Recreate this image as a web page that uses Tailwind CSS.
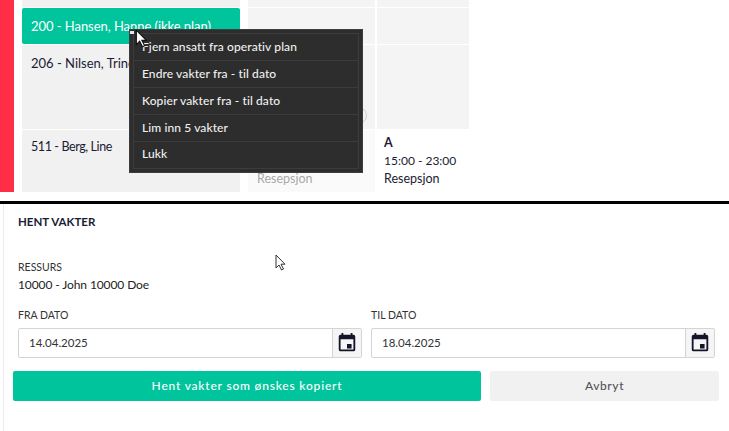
<!DOCTYPE html>
<html lang="no">
<head>
  <meta charset="UTF-8"/>
  <title>Hent vakter</title>
  <script src="https://cdn.jsdelivr.net/npm/@tailwindcss/browser@4"></script>
</head>
<body class="w-[729px] h-[431px] overflow-hidden bg-white font-['Lato',sans-serif] text-[#1b1b33]">

  <!-- Schedule -->
  <div class="relative flex h-[192px] overflow-hidden">
    <div class="w-[14px] bg-[#ff2d46]"></div>
    <div class="ml-[8px] w-[218px] flex flex-col gap-[1px]">
      <div class="h-[7px] bg-[#f1f1f1]"></div>
      <div class="h-[36px] bg-[#00c59c] rounded-[2px] pl-[9px] pt-[9px] text-[13px] leading-[18px] tracking-[-0.05px] text-white">200 - Hansen, Hanne (ikke plan)</div>
      <div class="h-[84px] bg-[#f1f1f1] pl-[9px] pt-[9px] text-[13px] leading-[18px]">206 - Nilsen, Trine</div>
      <div class="flex-1 bg-[#f1f1f1] pl-[9px] pt-[8px] text-[12.5px] leading-[18px] tracking-[-0.4px]">511 - Berg, Line</div>
    </div>
    <div class="ml-[8px] w-[127px] flex flex-col gap-[1px]">
      <div class="h-[7px] bg-[#f4f4f4]"></div>
      <div class="h-[36px] bg-[#f4f4f4]"></div>
      <div class="h-[84px] bg-[#f4f4f4]"></div>
      <div class="flex-1 bg-[#fafafa] pl-[9px] pt-[40px] text-[12.5px] leading-[18px] text-[#a8a8a8]">Resepsjon</div>
    </div>
    <div class="ml-[2px] w-[92px] flex flex-col gap-[1px]">
      <div class="h-[7px] bg-[#f4f4f4]"></div>
      <div class="h-[36px] bg-[#f4f4f4]"></div>
      <div class="h-[84px] bg-[#f4f4f4]"></div>
      <div class="flex-1 mt-[1px] bg-white pl-[7px] pt-[3px] text-[12.5px] leading-[18px]">
        <div class="font-bold">A</div>
        <div class="text-[12px]">15:00 - 23:00</div>
        <div>Resepsjon</div>
      </div>
    </div>

    <!-- Circle peeking out behind the menu -->
    <div class="absolute left-[348px] top-[107px] w-[19px] h-[17px] rounded-full border border-[#cfcfcf]"></div>

    <!-- Context menu -->
    <div class="absolute left-[129px] top-[29px] w-[234px] h-[144px] bg-[#2d2d2d] border border-[#3d3d3d] p-[3px] text-[12px] tracking-[0.1px] font-medium text-[#f0f0f0]">
      <div class="h-[28px] border border-[#3c3c3c] pl-[8px] flex items-center">Fjern ansatt fra operativ plan</div>
      <div class="h-[27px] border-x border-b border-[#3c3c3c] pl-[8px] flex items-center">Endre vakter fra - til dato</div>
      <div class="h-[27px] border-x border-b border-[#3c3c3c] pl-[8px] flex items-center">Kopier vakter fra - til dato</div>
      <div class="h-[27px] border-x border-b border-[#3c3c3c] pl-[8px] flex items-center">Lim inn 5 vakter</div>
      <div class="h-[27px] border-x border-b border-[#3c3c3c] pl-[8px] pb-[2px] flex items-center">Lukk</div>
    </div>
    <div class="absolute left-[130px] top-[31px] w-[4px] h-[3px] bg-[#e8e8e8]"></div>
    <svg class="absolute left-[135px] top-[29px]" width="16" height="20" viewBox="0 0 14 18"><path d="M1 1v13l3-3 2.500 5 2-1-2.500-4.800h4z" fill="#fff" stroke="#111" stroke-width="1"/></svg>
  </div>

  <div class="mt-[9px] h-[3px] bg-black"></div>

  <!-- Form -->
  <div class="relative h-[228px] ml-[3px] border-l border-[#ececec] pl-[14px] pr-[14px]">
    <h2 class="pt-[10px] text-[11.5px] leading-[16px] font-bold">HENT VAKTER</h2>
    <div class="mt-[30px] text-[10.500px] leading-[14px] text-[#333]">RESSURS</div>
    <div class="mt-[3px] text-[12px] leading-[16px] tracking-[-0.1px] text-[#222]">10000 - John 10000 Doe</div>

    <div class="mt-[15px] flex gap-[9px]">
      <div class="w-[344px]">
        <div class="text-[10.500px] leading-[14px] text-[#333]">FRA DATO</div>
        <div class="mt-[6px] h-[30px] flex border border-[#d4d4d4] rounded-[2px]">
          <div class="flex-1 pl-[10px] text-[11.5px] leading-[27px] text-[#333]">14.04.2025</div>
          <div class="w-[29px] flex items-center justify-center bg-[#f5f5f5] border-l border-[#d4d4d4]">
            <svg width="22" height="22" viewBox="0 0 24 24" fill="#14142b"><path d="M19 3h-1V1h-2v2H8V1H6v2H5a2 2 0 0 0-2 2v14a2 2 0 0 0 2 2h14a2 2 0 0 0 2-2V5a2 2 0 0 0-2-2zm0 16H5V8h14zm-7-6h5v5h-5z"/></svg>
          </div>
        </div>
      </div>
      <div class="w-[344px]">
        <div class="text-[10.500px] leading-[14px] text-[#333]">TIL DATO</div>
        <div class="mt-[6px] h-[30px] flex border border-[#d4d4d4] rounded-[2px]">
          <div class="flex-1 pl-[10px] text-[11.5px] leading-[27px] text-[#333]">18.04.2025</div>
          <div class="w-[29px] flex items-center justify-center bg-[#f5f5f5] border-l border-[#d4d4d4]">
            <svg width="22" height="22" viewBox="0 0 24 24" fill="#14142b"><path d="M19 3h-1V1h-2v2H8V1H6v2H5a2 2 0 0 0-2 2v14a2 2 0 0 0 2 2h14a2 2 0 0 0 2-2V5a2 2 0 0 0-2-2zm0 16H5V8h14zm-7-6h5v5h-5z"/></svg>
          </div>
        </div>
      </div>
    </div>

    <div class="mt-[13px] -ml-[5px] flex gap-[9px]">
      <button class="w-[468px] shrink-0 h-[30px] bg-[#00c59c] rounded-[2px] text-white text-[12px] font-medium tracking-[0.8px]">Hent vakter som ønskes kopiert</button>
      <button class="w-[229px] shrink-0 h-[30px] bg-[#f1f1f1] rounded-[2px] text-[#555] text-[12px] font-medium tracking-[0.6px]">Avbryt</button>
    </div>

    <svg class="absolute left-[271px] top-[50px]" width="14" height="18" viewBox="0 0 14 18"><path d="M1 1v13l3-3 2.500 5 2-1-2.500-4.800h4z" fill="#fff" stroke="#333" stroke-width="1"/></svg>
  </div>
</body>
</html>
